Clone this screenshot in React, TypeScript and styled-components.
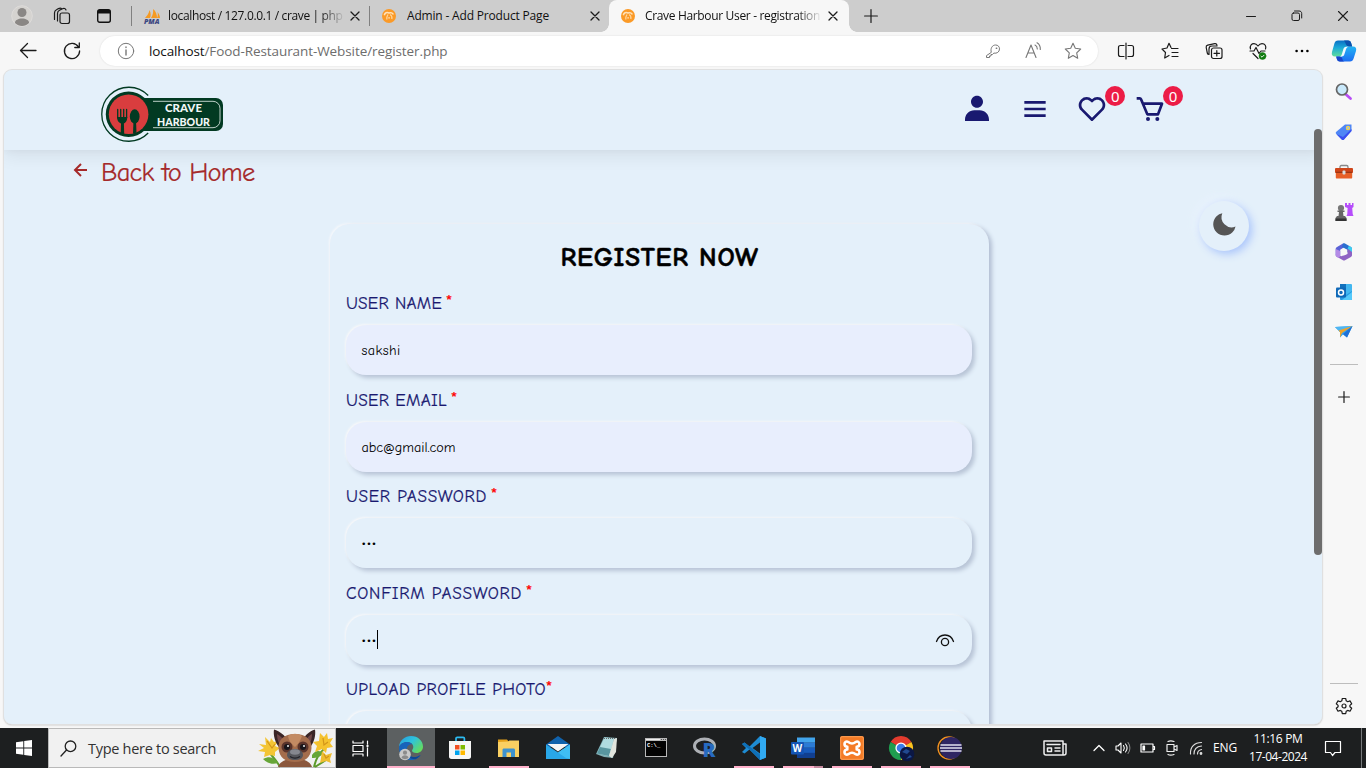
import React, { useLayoutEffect, useRef, useState } from 'react';
import styled, { createGlobalStyle, css } from 'styled-components';
import { BiSolidUser, BiMenu, BiHeart, BiCart, BiLeftArrowAlt, BiSolidMoon } from 'react-icons/bi';

const GlobalStyle = createGlobalStyle`
  * { box-sizing: border-box; }
  body { margin: 0; overflow: hidden; background: #f7f7f7; }
  svg { overflow: visible; flex: none; }
`;

const uiFont = `'Segoe UI', 'Open Sans', 'Noto Sans', sans-serif`;
const pageFont = `'Comic Sans MS', 'Comic Neue', 'Open Sans', sans-serif`;

/* ---------- text set to a fixed measure ---------- */

const Measured = styled.span`
  display: inline-block;
  white-space: pre;
  flex: none;
`;

function FitText({ width, children, className }: { width: number; children: string; className?: string }) {
  const ref = useRef<HTMLSpanElement>(null);
  const [spacing, setSpacing] = useState(0);
  useLayoutEffect(() => {
    if (ref.current) {
      const natural = ref.current.getBoundingClientRect().width;
      setSpacing((width - natural) / children.length);
    }
  }, [width, children]);
  return (
    <Measured ref={ref} className={className} style={{ letterSpacing: `${spacing}px` }}>
      {children}
    </Measured>
  );
}

/* ---------- browser window ---------- */

const Desktop = styled.div`
  width: 1366px;
  height: 768px;
  display: flex;
  flex-direction: column;
  overflow: hidden;
  background: #f7f7f7;
  font-family: ${uiFont};
  color: #111;
`;

const TabStrip = styled.div`
  height: 32px;
  flex: none;
  display: flex;
  align-items: center;
  background: #cdcdcd;
`;

const Slot = styled.div<{ $w: number }>`
  width: ${(p) => p.$w}px;
  height: 100%;
  flex: none;
  display: flex;
  align-items: center;
  justify-content: center;
`;

const Tab = styled.div<{ $w: number; $active?: boolean }>`
  position: relative;
  width: ${(p) => p.$w}px;
  height: 32px;
  flex: none;
  display: flex;
  align-items: center;
  padding-left: 10px;
  ${(p) =>
    p.$active &&
    css`
      background: #f7f7f7;
      border-radius: 8px 8px 0 0;
      &::before,
      &::after {
        content: '';
        position: absolute;
        bottom: 0;
        width: 8px;
        height: 8px;
      }
      &::before {
        left: -8px;
        background: radial-gradient(circle at 0 0, transparent 7.5px, #f7f7f7 8px);
      }
      &::after {
        right: -8px;
        background: radial-gradient(circle at 100% 0, transparent 7.5px, #f7f7f7 8px);
      }
    `}
`;

const TabTitle = styled.div<{ $fade?: boolean; $gap?: number }>`
  width: 176px;
  margin-left: ${(p) => p.$gap ?? 8}px;
  overflow: hidden;
  font-size: 12px;
  line-height: 20px;
  white-space: nowrap;
  ${(p) => p.$fade && css`mask-image: linear-gradient(90deg, #000 152px, transparent 177px);`}
`;

const CloseBox = styled.div`
  width: 24px;
  display: flex;
  justify-content: center;
`;

const Divider = styled.div`
  width: 1px;
  height: 20px;
  background: #808080;
`;

const Spacer = styled.div`
  flex: 1;
`;

const Toolbar = styled.div`
  height: 37px;
  flex: none;
  display: flex;
  align-items: center;
  padding: 0 0 0 6px;
`;

const AddressBar = styled.div`
  width: 998px;
  height: 30px;
  margin-left: 6px;
  flex: none;
  display: flex;
  align-items: center;
  border-radius: 15px;
  background: #fff;
  box-shadow: 0 0 2px rgba(0, 0, 0, 0.12);
  padding: 0 6px 0 6px;
  font-size: 13.5px;
`;

const UrlPath = styled.span`
  color: #6d6d6d;
`;

const Content = styled.div`
  height: 659px;
  flex: none;
  display: flex;
  padding: 1px 0 0 4px;
`;

const Viewport = styled.div`
  position: relative;
  width: 1318px;
  height: 654px;
  flex: none;
  overflow: hidden;
  border-radius: 8px;
  background: #e4f0fa;
  box-shadow: 0 0 0 1px #e0e0e0, 0 1px 2px rgba(0, 0, 0, 0.3);
  font-family: ${pageFont};
`;

const ScrollThumb = styled.div`
  position: absolute;
  right: 0;
  top: 59px;
  width: 8px;
  height: 426px;
  border-radius: 4px;
  background: #6d6d6d;
`;

const SideBar = styled.div`
  width: 44px;
  display: flex;
  flex-direction: column;
  align-items: center;
  padding-top: 2px;
`;

const SideItem = styled.div<{ $h?: number }>`
  height: ${(p) => p.$h ?? 40}px;
  display: flex;
  align-items: center;
`;

const SideRule = styled.div`
  width: 28px;
  height: 1px;
  background: #bdbdbd;
`;

/* ---------- web page ---------- */

const SiteHeader = styled.header`
  height: 80px;
  width: 1318px;
  display: flex;
  align-items: center;
  justify-content: space-between;
  padding: 0 156px 0 96px;
  box-shadow: 0 8px 16px rgba(0, 0, 0, 0.06), 0 2px 6px rgba(0, 0, 0, 0.03);
`;

const Brand = styled.div`
  display: flex;
  margin-top: 8px;
`;

const Nav = styled.nav`
  display: flex;
  gap: 25.6px;
  margin-top: -2px;
  color: #191970;
`;

const NavItem = styled.div`
  position: relative;
  width: 32px;
  height: 32px;
  svg {
    display: block;
    width: 32px;
    height: 32px;
  }
`;

const Count = styled.span`
  position: absolute;
  left: 29px;
  top: -7px;
  width: 20px;
  height: 20px;
  border-radius: 50%;
  background: #ec1c46;
  color: #fff;
  font-family: 'Noto Sans', sans-serif;
  font-size: 15px;
  font-weight: 400;
  line-height: 20px;
  text-align: center;
`;

const BackLink = styled.a`
  display: flex;
  align-items: center;
  height: 40px;
  margin-top: 2px;
  padding-left: 65px;
  color: #a52a2a;
  font-size: 26.5px;
  -webkit-text-stroke: 0.2px currentColor;
  svg {
    width: 24px;
    height: 24px;
    margin: -4px 8px 0 0;
    stroke: none;
  }
`;

const RegisterCard = styled.form`
  width: 659px;
  height: 640px;
  margin: 32px 0 0 326px;
  padding: 17px 16px;
  border-radius: 20px;
  box-shadow: 3px 2px 4px 0 #b3bfd3, -1px -1px 2px 0 #f8f9fb;
`;

const Heading = styled.h1`
  margin: 0 0 14px;
  height: 34px;
  line-height: 34px;
  text-align: center;
  font-size: 27px;
  font-weight: 700;
  color: #000;
  -webkit-text-stroke: 0.5px currentColor;
`;

const Field = styled.div`
  height: 96.5px;
`;

const Label = styled.label`
  display: flex;
  height: 36px;
  line-height: 30px;
  font-size: 17.2px;
  color: #191970;
  -webkit-text-stroke: 0.2px currentColor;
`;

const Star = styled.sup<{ $gap: number }>`
  margin-left: ${(p) => p.$gap}px;
  color: #ff0000;
  font-size: 18px;
  line-height: 26px;
`;

const InputBox = styled.div<{ $filled?: boolean }>`
  height: 50px;
  display: flex;
  align-items: center;
  padding: 1px 17px 0 15.5px;
  width: 626px;
  border-radius: 20px;
  background: ${(p) => (p.$filled ? '#e8eefd' : '#e4f0fa')};
  box-shadow: 3px 3px 4px 0 #b8c4d6, -1px -1px 2px 0 #f8f8f9;
  color: #000;
  font-size: 14.2px;
`;

const Dots = styled.span`
  display: inline-flex;
  margin-top: -2px;
`;

const Caret = styled.span`
  width: 1px;
  height: 19px;
  margin-top: -1px;
  background: #000;
`;

const ThemeToggle = styled.button`
  position: absolute;
  left: 1195px;
  top: 131px;
  width: 50px;
  height: 50px;
  padding: 0 0 3px 0;
  display: flex;
  align-items: center;
  justify-content: center;
  border: 0;
  border-radius: 50%;
  color: #555;
  background: #e4f0fa;
  box-shadow: 3px 3px 9px #a9c4fb, -4px -4px 12px #e9f2fd, 0 0 1px #f3f8ff;
`;

/* ---------- taskbar ---------- */

const TaskBar = styled.div`
  height: 40px;
  flex: none;
  display: flex;
  align-items: center;
  background: #1d1f20;
  color: #fff;
`;

const SearchBox = styled.div`
  width: 288px;
  height: 40px;
  flex: none;
  display: flex;
  align-items: center;
  border: 1px solid #b9b9b9;
  background: #f1f1f1;
  color: #333;
  font-size: 14.5px;
  padding: 0 1px 0 9px;
`;

const Task = styled.div<{ $focus?: boolean; $running?: boolean; $stacked?: boolean }>`
  width: 49px;
  height: 40px;
  flex: none;
  display: flex;
  align-items: center;
  justify-content: center;
  ${(p) =>
    p.$focus &&
    css`
      background:
        linear-gradient(#ffb1cb, #ffb1cb) center bottom / 48px 2px no-repeat,
        linear-gradient(#5c6061, #5c6061) center / 48px 40px no-repeat;
    `}
  ${(p) =>
    p.$running &&
    css`
      background: linear-gradient(#ffb1cb, #ffb1cb) center bottom / 40px 2px no-repeat;
    `}
  ${(p) =>
    p.$stacked &&
    css`
      background: linear-gradient(90deg, #ffb1cb 31px, #c58a9f 31px) center bottom / 40px 2px no-repeat;
    `}
`;

const TrayGroup = styled.div`
  display: flex;
  align-items: center;
  height: 100%;
`;

const Language = styled.div`
  width: 24px;
  font-size: 12px;
  line-height: 18px;
`;

const Clock = styled.div`
  width: 60px;
  margin-left: 11px;
  display: flex;
  flex-direction: column;
  align-items: center;
  font-size: 12px;
  line-height: 18px;
`;

const PeekLine = styled.div`
  width: 1px;
  height: 40px;
  margin: 0 4px 0 10px;
  background: #76797b;
`;

/* ---------- drawings ---------- */

type LineProps = { w?: number; h?: number; color?: string; sw?: number; children: React.ReactNode };

const Line = ({ w = 20, h = 20, color = '#1b1b1b', sw = 1.2, children }: LineProps) => (
  <svg width={w} height={h} viewBox={`0 0 ${w} ${h}`} fill="none" stroke={color} strokeWidth={sw} strokeLinecap="round" strokeLinejoin="round">
    {children}
  </svg>
);

const Art = ({ w = 24, h = 24, children }: { w?: number; h?: number; children: React.ReactNode }) => (
  <svg width={w} height={h} viewBox={`0 0 ${w} ${h}`}>{children}</svg>
);

const CloseIcon = () => (
  <Line w={10} h={10} sw={1.3}><path d="M1 1l8 8M9 1l-8 8" /></Line>
);

const XamppFavicon = () => (
  <Art w={14} h={14}>
    <circle cx="7" cy="7" r="7" fill="#fb9a27" />
    <path d="M2.300 6.200c.6-2.400 2.600-3.300 4.700-2.200 1.700-.9 3.700 0 4.300 1.600" stroke="#ffe2ba" strokeWidth="1.500" fill="none" />
    <path d="M6 5.500c-1 1.500-1.400 3-1.200 5M8.200 5.500c1.500 1 2 2.500 1.600 4.500" stroke="#ffd49a" strokeWidth="1.300" fill="none" />
    <path d="M6.300 8.800h1.600" stroke="#ffe2ba" strokeWidth="1.200" />
  </Art>
);

const Logo = () => (
  <svg width="124" height="57" viewBox="0 0 124 57">
    <path d="M48.200 9.500a27 27 0 1 0 0 37.500" fill="none" stroke="#023a22" strokeWidth="1.300" />
    <rect x="38" y="12" width="85" height="33" rx="7" fill="#023a22" />
    <circle cx="28.600" cy="28.200" r="24" fill="#e4f0fa" />
    <circle cx="28.600" cy="28.200" r="22.800" fill="#023a22" />
    <rect x="42" y="12" width="12" height="33" fill="#023a22" />
    <circle cx="28.600" cy="28.200" r="19.800" fill="#d93d3e" />
    <path d="M53 15.300h60a7 7 0 0 1 7 7v12.400a7 7 0 0 1-7 7H53" fill="none" stroke="#eef5f3" strokeWidth="0.800" />
    <path d="M17.700 23.500v8M20.700 23.500v8M23.700 23.500v8M26.600 23.500v8" stroke="#023a22" strokeWidth="1.300" strokeLinecap="round" />
    <path d="M17 31c0 4.500 2.800 6 4 6.400L20.700 48h3.500l-.3-10.600c1.600-.4 3.400-2.400 3.400-6.400z" fill="#023a22" />
    <ellipse cx="34.700" cy="30.500" rx="4.900" ry="7.200" fill="#023a22" />
    <path d="M33.400 37h2.700l.4 9.500-3.500 1.200z" fill="#023a22" />
    <g fill="#f2f7f7" fontFamily="Lato, 'Open Sans', sans-serif" fontWeight="900" fontSize="11.500">
      <text x="65" y="25.800" textLength="37" lengthAdjust="spacingAndGlyphs">CRAVE</text>
      <text x="57" y="40" textLength="53" lengthAdjust="spacingAndGlyphs">HARBOUR</text>
    </g>
  </svg>
);

const Copilot = () => (
  <svg width="26" height="26" viewBox="0 0 26 26">
    <defs>
      <linearGradient id="copA" x1="0" y1="0" x2="0" y2="1">
        <stop offset="0" stopColor="#0a6fc4" /><stop offset=".45" stopColor="#1ba9d8" /><stop offset="1" stopColor="#5fdd9c" />
      </linearGradient>
      <linearGradient id="copB" x1="0" y1="0" x2="0" y2="1">
        <stop offset="0" stopColor="#22b4f4" /><stop offset="1" stopColor="#1c6df2" />
      </linearGradient>
    </defs>
    <path d="M7 2.500h10c2 0 2.800 1 3.300 3l.9 3h-3.700c-2 0-2.600.7-3.200 2.600l-1.600 5c-.7 1.800-1.400 2.400-3.300 2.400H4c-2.600 0-3.800-1.800-3-4.600l2.400-8.300c.6-2 1.600-3.100 3.600-3.100z" fill="url(#copA)" />
    <path d="M19 23.500H9c-2 0-2.800-1-3.300-3l-.5-2h4c2 0 2.800-.6 3.400-2.500l1.600-5c.6-1.900 1.300-2.500 3.200-2.500H22c2.600 0 3.800 1.600 3 4.400l-2.400 7.600c-.6 2-1.600 3-3.600 3z" fill="url(#copB)" />
    <path d="M13 2.500h4c2 0 2.800 1 3.300 3l.9 3h-3.700C15 8.500 14.500 4 13 2.500z" fill="#0b52ae" />
    <path d="M5.200 18.500h4c1.500 0 2 1.500 2.400 3 .3 1.200.9 2 2 2H9c-2 0-2.800-1-3.300-3z" fill="#1745c9" />
    <path d="M15 8.700h3c-1.800.3-2.400 1-3 2.600l-1.600 4.900c-.5 1.500-1.200 2.200-2.900 2.300H8.500c1.500-.4 2-1.300 2.400-2.600l1.500-4.800c.4-1.300 1.200-2.200 2.600-2.400z" fill="#eef9ff" />
  </svg>
);

const SideSearch = () => (
  <Art w={18} h={18}>
    <path d="M11 11.500l4.500 4" stroke="#b84df5" strokeWidth="2.800" strokeLinecap="round" />
    <circle cx="7" cy="6.500" r="5.500" fill="#c9e9fb" stroke="#666" strokeWidth="1.700" />
  </Art>
);
const SideTag = () => (
  <Art w={18} h={18}>
    <path d="M10 1.500h6.500V8L9 16.500c-.8.800-1.500.800-2.300 0L1.300 11c-.7-.8-.7-1.600 0-2.300z" fill="#4f86f5" />
    <path d="M1.300 11l5.400 5.500c.8.800 1.500.800 2.300 0L16.500 8V6L8 14z" fill="#3a4ff0" />
    <circle cx="13" cy="5" r="1.600" fill="#8fc0ff" stroke="#f5d34b" strokeWidth="1.200" />
  </Art>
);
const SideToolbox = () => (
  <Art w={18} h={18}>
    <path d="M5 6V4c0-1 .6-1.500 1.300-1.500h5.400c.8 0 1.300.5 1.300 1.500v2" fill="none" stroke="#888" strokeWidth="1.300" />
    <rect x="0" y="5" width="18" height="5" rx="1" fill="#cf4519" />
    <path d="M.8 9h16.400v5.500c0 .8-.4 1-1 1H1.800c-.6 0-1-.4-1-1z" fill="#e75f27" />
    <path d="M.8 9.300h16.400" stroke="#8a2c0f" strokeWidth="1" />
    <rect x="7.500" y="7.500" width="3" height="4" rx="1" fill="#d8dcdd" />
  </Art>
);
const SideChess = () => (
  <Art w={20} h={18}>
    <path d="M11 0h2v2h1.500V0h2v2H18V0h1.500v4l-1.300 1 .5 6 .8 2h-7l.8-2 .3-6L11 4z" fill="#b64dfb" />
    <circle cx="7" cy="5" r="3.100" fill="#777" />
    <path d="M3.500 7.500h7v1.600H9l.5 3.900H11l1.500 2v3h-11v-3L3 13h1.500L5 9.100H3.500z" fill="#666" />
    <path d="M1.500 15.500h11V18h-11z" fill="#333" />
  </Art>
);
const Side365 = () => (
  <Art w={18} h={18}>
    <path d="M8 .5l-6 3.400C1 4.500.7 5 .7 6v6l4.500 2V6.800L11 3z" fill="#5a62d6" />
    <path d="M8 .5c.8-.4 1.400-.3 2 0l6 3.500c.8.500 1 1 1 2v5.500L12.500 9V6.800L7 4z" fill="#2a6fcf" />
    <path d="M17 7v5c0 1-.4 1.500-1.100 2L10 17.300c-.8.400-1.400.4-2 0l-6.200-3.500c-.8-.5-1.100-1-1.100-2l5.500 1.500L12.500 11V6z" fill="#8f62c4" />
    <path d="M.7 6v6c0 1 .3 1.500 1.100 2l2 1L5.200 13V8z" fill="#b48be6" />
    <path d="M12.500 5.500L17 9V6c0-1-.3-1.500-1-2l-2-1.200z" fill="#3ccdf0" />
    <path d="M9 5.500l3 1.700v3.500L9 12.500l-3-1.800V7.200z" fill="#f7f7f7" />
  </Art>
);
const SideOutlook = () => (
  <Art w={18} h={18}>
    <rect x="5" y="1" width="12" height="11" rx="1" fill="#42b7f0" />
    <path d="M5 1h6v6H5z" fill="#1272bd" />
    <path d="M5 9l6 3 6-4v8c0 .6-.4 1-1 1H6c-.6 0-1-.4-1-1z" fill="#279be2" />
    <path d="M17 9v7c0 .6-.4 1-1 1H7z" fill="#54c9fa" />
    <rect x="1" y="4.500" width="10" height="10" rx="1" fill="#0f69b8" />
    <circle cx="6" cy="9.500" r="2.500" fill="none" stroke="#fff" strokeWidth="1.500" />
  </Art>
);
const SideDrop = () => (
  <Art w={18} h={18}>
    <path d="M0 4l17.500-1L12 14.500 8 11.500l-3 3V9z" fill="#31a1ea" />
    <path d="M0 4l17.500-1L5 9z" fill="#4fb6f2" />
    <path d="M3.500 7.500L17.500 3 7 10l-2 4.500V9z" fill="#f0a42a" />
    <path d="M8 11l9.500-8L12 14.500z" fill="#1f71d8" />
  </Art>
);

const Mascot = () => (
  <svg width="76" height="38" viewBox="0 0 76 38">
    <path d="M8 18c4 8 10 12 14 20M66 20c-6 6-8 10-10 18M68 31l-11 7" stroke="#5d9b2c" strokeWidth="2" fill="none" />
    <path d="M5 30c7-4 12-1 15 4-6 2-11 0-15-4zM54 26c3-5 8-5 11-2-2 4-6 5-11 5z" fill="#67a638" />
    <path d="M7 8l5 5 1-4 3 4 4-1-3 5 5 2-5 4v4l-5-1-6 2 1-5-7-1 6-3-5-4 7 1z" fill="#f3c535" />
    <path d="M62 4l4 4 3-4 1 6 5-1-3 5 3 4-6 1-1 5-4-4-7 3 2-6-4-4 6-1z" fill="#f5c22e" />
    <path d="M64 22l4 4 6-2-2 6 1 4-5-2-6 2 1-5z" fill="#efbd30" />
    <path d="M9 12l5 7 3-4M65 9l1 7 4-3M66 25l2 4 3-2" stroke="#d39519" strokeWidth="1.200" fill="none" />
    <path d="M16 .5c6 2 11 6 13 10l-7 9C17 14 15 6 16 .500zM57 .5c-6 2-10 6-12 10l7 8c4-5 6-12 5-18z" fill="#3a2526" />
    <path d="M19 5c4 2 6 5 7 7l-4 4c-2-3-3-7-3-11zM54 5c-4 2-5 5-6 7l3 4c2-3 3-7 3-11z" fill="#714748" />
    <path d="M20 38c2-6 8-8 17-8s15 2 17 8z" fill="#8b573c" />
    <path d="M37 5c11 0 17 6 16.500 14C53 28 47 33 37 33s-16-5-16.500-14C20 11 26 5 37 5z" fill="#a46d4c" />
    <path d="M30 7c4-3 10-3 14 0-2 6-4 8-7 11-3-3-6-5-7-11z" fill="#c38b63" />
    <circle cx="29" cy="18" r="5.500" fill="#5a342b" /><circle cx="45" cy="18" r="5.500" fill="#5a342b" />
    <circle cx="29" cy="18" r="3" fill="#18151a" /><circle cx="45" cy="18" r="3" fill="#18151a" />
    <circle cx="30" cy="17" r="1" fill="#eee" /><circle cx="46" cy="17" r="1" fill="#eee" />
    <path d="M29 26c0-4 4-6 8-6s8 2 8 6c0 3-3 5-8 5s-8-2-8-5z" fill="#55565c" />
    <ellipse cx="37" cy="23" rx="5" ry="2.800" fill="#85878f" />
    <path d="M32 27.500c3 2 7 2 10 0" stroke="#222229" strokeWidth="1.300" fill="none" />
  </svg>
);

const EdgeIcon = () => (
  <svg width="26" height="26" viewBox="0 0 26 26">
    <defs>
      <linearGradient id="edgeTop" x1="0" y1="0" x2="1" y2=".7">
        <stop offset="0" stopColor="#269cdf" /><stop offset=".5" stopColor="#2ec2dd" /><stop offset="1" stopColor="#65dc5c" />
      </linearGradient>
    </defs>
    <path d="M1 12C1.500 5 7 1 13 1c7 0 12 5 12 10.500 0 4-3 6.500-6.500 6.500-3 0-4.500-1.200-4.500-2.400 0-1 1.300-1.600 1.300-3.600C15.300 8.500 12 7 9 7c-4 0-7 2.500-8 5z" fill="url(#edgeTop)" />
    <path d="M1 12c1-2.500 4-5 8-5 2.500 0 4.500.9 5.600 2.500-3-1-6 1.500-6 5.500 0 5.500 5.500 8.500 11 6.500l3-1.500c-2 3.200-5.600 5-9.600 5C6 25 .6 19 1 12z" fill="#1764bb" />
    <path d="M8.600 15c0 5.500 5.500 8.500 11 6.500l3-1.500c-1 1.600-3 3.300-5.200 4.200C11 24 7 20 8.600 15z" fill="#0f4694" />
    <circle cx="7" cy="19.500" r="5.800" fill="#c9c9c9" />
    <circle cx="7" cy="17.700" r="2.100" fill="#8b8b8b" /><path d="M3.500 23c.3-3.600 6.700-3.600 7 0-2 1.500-5 1.500-7 0z" fill="#8b8b8b" />
  </svg>
);
const StoreIcon = () => (
  <Art>
    <path d="M8 5V2.500c0-.8.500-1.200 1.200-1.200h6c.8 0 1.200.4 1.200 1.200V5" stroke="#2cbcf2" strokeWidth="1.700" fill="none" />
    <path d="M1 5h22v15.500c0 1.600-.8 2.500-2.500 2.500h-17C1.800 23 1 22 1 20.500z" fill="#f6f6f6" />
    <path d="M7 9h4.500v4.500H7z" fill="#f25022" /><path d="M12.500 9H17v4.500h-4.500z" fill="#7fba00" />
    <path d="M7 14.500h4.500V19H7z" fill="#00a4ef" /><path d="M12.500 14.500H17V19h-4.500z" fill="#ffb900" />
  </Art>
);
const FolderIcon = () => (
  <Art>
    <path d="M1 3.500h9l2 2.500H1z" fill="#e6a21a" /><path d="M1 6l10-.500 1.500-1H22v16.500H1z" fill="#fad062" />
    <path d="M5.500 21v-7c0-1 .6-1.500 1.500-1.500h9.500c1 0 1.500.6 1.500 1.500v7h-4v-4.500H9.500V21z" fill="#3e92ce" />
  </Art>
);
const MailIcon = () => (
  <Art>
    <path d="M0 8.500L12 0l12 8.500V11H0z" fill="#1062ac" />
    <path d="M0 8.500l12 8 12-8V23H0z" fill="#29a7e8" /><path d="M0 8.500L20 22l4 1V8.500l-12 8z" fill="#3fbef3" />
    <path d="M1.500 8h21L12 15.500z" fill="#f5f5f5" />
  </Art>
);
const NotepadIcon = () => (
  <Art>
    <path d="M9 1l13 1-4 20-9-1-8-3z" fill="#7faeb4" /><path d="M9.500 1.500l9.500.7-4.500 18L2 17.500z" fill="#b0dbe0" />
    <path d="M5 11l11 2-2 7-12-2.500z" fill="#5996a0" /><path d="M22 2l-1 14-4 6-3-2L19 3z" fill="#e1e4dd" />
    <path d="M9 2.500h12" stroke="#666" strokeDasharray="1 1" />
  </Art>
);
const TerminalIcon = () => (
  <Art>
    <path d="M1 2h22v19H1z" fill="#b9b9b9" /><path d="M2 5h20v15H2z" fill="#030303" />
    <path d="M2 3.500h14" stroke="#eee" /><path d="M17 3.500h5" stroke="#555" strokeDasharray="1 1" />
    <text x="3" y="11" fill="#fff" fontSize="5.500" fontFamily="'Liberation Mono', monospace" fontWeight="700">C:\_</text>
  </Art>
);
const RIcon = () => (
  <Art>
    <ellipse cx="11.500" cy="10" rx="10" ry="7" fill="none" stroke="#adb0b5" strokeWidth="3" />
    <text x="9.500" y="21" fill="#276ac0" fontSize="19" fontWeight="800" fontFamily="'Open Sans', sans-serif">R</text>
  </Art>
);
const CodeIcon = () => (
  <Art>
    <path d="M18 0l6 2.500v19L18 24 7.500 13.500 2.500 17.500 0 16l4-4-4-4 2.500-1.500 5 4z" fill="#1e8cd3" />
    <path d="M18 6.500v11L10.500 12z" fill="#1d1f20" /><path d="M18 0l6 2.500v19L18 24z" fill="#31aaf2" />
    <path d="M0 8l2.500-1.500L18 18.500V24L7.500 13.500z" fill="#0f6fb7" />
  </Art>
);
const WordIcon = () => (
  <Art>
    <path d="M6 1.500h18v5.200H6z" fill="#42a5ec" /><path d="M6 6.500h18v5.300H6z" fill="#2b7bd5" />
    <path d="M6 11.700h18V17H6z" fill="#185cbd" /><path d="M6 16.800h18V22H6z" fill="#113f90" />
    <rect y="6" width="13" height="12.500" rx="1" fill="#1455b5" />
    <text x="1.600" y="15.700" fill="#fff" fontSize="10" fontWeight="700" fontFamily="'Open Sans', sans-serif">W</text>
  </Art>
);
const XamppIcon = () => (
  <Art>
    <rect width="24" height="24" rx="2" fill="#f47b26" />
    <rect x=".7" y=".7" width="22.600" height="22.600" rx="1.500" fill="none" stroke="#ffa761" strokeWidth=".8" />
    <path
      d="M8.300 6c-2-1.300-3.800 0-3.800 2 0 1.600 1 2.700 2.800 2.700v2.800c-1.800 0-2.800 1-2.800 2.700 0 2 2 3.200 3.800 2 1.300-1 2-1.500 3.700-1.500s2.400.5 3.700 1.500c1.800 1.200 3.800 0 3.800-2 0-1.600-1-2.700-2.800-2.700v-2.800c1.800 0 2.800-1 2.800-2.700 0-2-2-3.300-3.800-2C14.400 7 13.700 7.500 12 7.500S9.600 7 8.300 6z"
      fill="none"
      stroke="#fff"
      strokeWidth="2.600"
      strokeLinejoin="round"
    />
  </Art>
);
const ChromeIcon = () => (
  <svg width="24" height="24" viewBox="0 0 24 24">
    <path d="M12 12L1.600 6A12 12 0 0 1 22.400 6z" fill="#e33b2e" /><path d="M12 12L22.400 6A12 12 0 0 1 12 24z" fill="#fcc31e" />
    <path d="M12 12V24A12 12 0 0 1 1.600 6z" fill="#1f9d4f" /><circle cx="12" cy="12" r="5.600" fill="#fff" /><circle cx="12" cy="12" r="4.300" fill="#3b7be8" />
    <circle cx="18" cy="18" r="7.300" fill="#0b1744" /><path d="M13 16l4-3 4 2-3 3zM17 23l4-4 2 2" fill="#214a91" />
  </svg>
);
const EclipseIcon = () => (
  <Art>
    <circle cx="11" cy="12" r="11" fill="none" stroke="#f5921f" strokeWidth="1.300" />
    <circle cx="13" cy="12" r="11" fill="#2f2663" />
    <path d="M2.500 9h21M2 12h22M2.500 15h21" stroke="#e1dfee" strokeWidth="1.300" />
  </Art>
);

const tasks: { icon: React.ReactNode; focus?: boolean; running?: boolean; stacked?: boolean }[] = [
  { icon: <EdgeIcon />, focus: true },
  { icon: <StoreIcon /> },
  { icon: <FolderIcon />, running: true },
  { icon: <MailIcon /> },
  { icon: <NotepadIcon /> },
  { icon: <TerminalIcon /> },
  { icon: <RIcon /> },
  { icon: <CodeIcon />, running: true },
  { icon: <WordIcon />, running: true, stacked: true },
  { icon: <XamppIcon />, running: true },
  { icon: <ChromeIcon />, running: true },
  { icon: <EclipseIcon />, running: true },
];

const sideIcons = [SideSearch, SideTag, SideToolbox, SideChess, Side365, SideOutlook, SideDrop];

const fields = [
  { label: 'USER NAME', width: 96, gap: 3.5, value: 'sakshi', valueWidth: 39, filled: true },
  { label: 'USER EMAIL', width: 101, gap: 3.5, value: 'abc@gmail.com', valueWidth: 94, filled: true },
  { label: 'USER PASSWORD', width: 141, gap: 3.5, value: '•••', valueWidth: 15.5, masked: true },
  { label: 'CONFIRM PASSWORD', width: 176, gap: 3.5, value: '•••', valueWidth: 15.5, masked: true, editing: true },
  { label: 'UPLOAD PROFILE PHOTO', width: 200, gap: -0.5, value: '', valueWidth: 0 },
];

function Tabs() {
  return (
    <TabStrip>
      <Slot $w={44}>
        <Art w={22} h={22}>
          <circle cx="11" cy="11" r="10.300" fill="#d5d3d0" stroke="#dedcda" />
          <circle cx="11" cy="7.500" r="4.500" fill="#8a8785" />
          <path d="M4 18c-.5-6 14.500-6 14 0-4 4-10 4-14 0z" fill="#8a8785" />
        </Art>
      </Slot>
      <Slot $w={36}>
        <Line w={18} h={18} sw={1.2}>
          <rect x="7" y="6" width="9.500" height="10.500" rx="2" />
          <path d="M4.500 14V6.500c0-1.500.7-2.500 2-3.200L9.500 1.700c1.700-.8 3 0 3.500 1.300M1.500 12.500V6c0-1.500.7-2.500 2-3.200l2-1.200C7 .8 8 1 8.800 1.800" />
        </Line>
      </Slot>
      <Slot $w={48}>
        <Art w={14} h={14}>
          <rect x=".7" y=".7" width="12.600" height="12.600" rx="2" fill="none" stroke="#111" strokeWidth="1.400" />
          <path d="M1 1h12v3.500H1z" fill="#111" />
        </Art>
      </Slot>
      <Slot $w={6}><Divider /></Slot>
      <Tab $w={233}>
        <Art w={16} h={16}>
          <path d="M1 10c2-2 4-5 4.500-8C7 5 7 8 6 10zM7 10c2-3 2.500-6 2-9 3 2 4 6 4 9zM13 10c1-2 1-4 .5-6C15 6 16 8 16 10z" fill="#f59a23" />
          <text x="0" y="15.500" textLength="15.500" lengthAdjust="spacingAndGlyphs" fontSize="6" fontStyle="italic" fontWeight="800" fill="#3d4882" fontFamily="'Open Sans', sans-serif">PMA</text>
        </Art>
        <TabTitle $fade><FitText width={174.5}>localhost / 127.0.0.1 / crave | php</FitText></TabTitle>
        <CloseBox><CloseIcon /></CloseBox>
      </Tab>
      <Slot $w={5}><Divider /></Slot>
      <Tab $w={237}>
        <XamppFavicon />
        <TabTitle $gap={11}><FitText width={142}>Admin - Add Product Page</FitText></TabTitle>
        <CloseBox><CloseIcon /></CloseBox>
      </Tab>
      <Tab $w={240} $active>
        <Slot $w={18}><XamppFavicon /></Slot>
        <TabTitle $fade $gap={8}><FitText width={175}>Crave Harbour User - registration</FitText></TabTitle>
        <CloseBox><CloseIcon /></CloseBox>
      </Tab>
      <Slot $w={43}><Line w={14} h={14}><path d="M7 .6v12.800M.6 7h12.800" /></Line></Slot>
      <Spacer />
      <Slot $w={46}><Line w={10} h={10} sw={1}><path d="M.5 5.500h9" /></Line></Slot>
      <Slot $w={46}><Line w={12} h={12} sw={1}><rect x="1" y="3" width="7.500" height="7.500" rx="1.500" /><path d="M3.500 1h4.500c1.700 0 2.700.9 2.700 2.500V8" /></Line></Slot>
      <Slot $w={46}><Line w={10} h={10} sw={1.100}><path d="M.5.5l9 9M9.500.5l-9 9" /></Line></Slot>
    </TabStrip>
  );
}

function ToolbarRow() {
  const grey = '#777';
  return (
    <Toolbar>
      <Slot $w={44}><Line w={18} h={18} sw={1.300}><path d="M1.500 8.500H17M8.500 1.500l-7 7 7 7" /></Line></Slot>
      <Slot $w={44}><Line w={18} h={18} sw={1.300}><path d="M15.500 5A7.600 7.600 0 1 0 16.600 9M16.300 1v4.500h-4.500" /></Line></Slot>
      <AddressBar>
        <Slot $w={40}><Line w={18} h={18} color={grey} sw={1}><circle cx="9" cy="9" r="7.700" /><path d="M9 8v5M9 5v.5" strokeWidth="1.400" /></Line></Slot>
        <Slot $w={3} />
        <FitText width={55.5}>localhost</FitText>
        <UrlPath><FitText width={243}>/Food-Restaurant-Website/register.php</FitText></UrlPath>
        <Spacer />
        <Slot $w={40}><Line w={16} h={16} color={grey} sw={1}><path d="M6.200 9c-1-3.500 1-7 4.400-7 2.400 0 3.900 1.700 3.900 3.900 0 3.200-2.800 4.800-5.700 4.200L7.500 11.500H6V13H4.500v1.500h-3V13z" /><path d="M11.300 5.200h.4" strokeWidth="1.500" /></Line></Slot>
        <Slot $w={40}><Line w={18} h={18} color={grey} sw={1.100}><path d="M2 15.500L7 3l5 12.500M3.800 11h6.500M11 3c1.500.7 2.300 2 2.300 4M13 .8c2.300 1.300 3.500 3.500 3.300 6.700" /></Line></Slot>
        <Slot $w={39}><Line w={18} h={18} color={grey} sw={1.100}><path d="M9 1.300l2.300 5 5.400.7-4 3.800 1 5.500L9 13.600l-4.700 2.700 1-5.500-4-3.800 5.400-.700z" /></Line></Slot>
      </AddressBar>
      <Slot $w={6} />
      <Slot $w={44}><Line w={18} h={18} sw={1.200}><path d="M9 1v16M7 3.500H3.500c-1 0-2 .7-2 2v7c0 1.300 1 2 2 2H7M11 3.500h3.500c1 0 2 .7 2 2v7c0 1.300-1 2-2 2H11" /></Line></Slot>
      <Slot $w={44}><Line w={18} h={18} sw={1.200}><path d="M10 5.500L8 1.300 6 6 1 7l3.500 3.500-.8 5.500L8 13.500M10.500 6.500H17M11 10.500h6M11 14.500h6" /></Line></Slot>
      <Slot $w={44}><Line w={18} h={18} sw={1.200}><rect x="6.500" y="6" width="10.500" height="10.500" rx="2" /><path d="M11.800 8.500v5.500M9 11.300h5.500M4 12.500c-1 0-1.500-.6-1.700-1.500L1.200 5.500c-.2-1.200.3-2 1.500-2.300l7-1.500c1.200-.2 2 .2 2.300 1.500M4 12.500V7c0-2 1-3 3-3h5" /></Line></Slot>
      <Slot $w={44}>
        <Line w={18} h={18} sw={1.200}><path d="M1.500 7C.5 3 3 1.700 5 1.700c2 0 3 1 4 2.300 1-1.300 2-2.300 4-2.300 3 0 4.500 2.500 3.500 5.300M1 9h4l2-3.500 3 6L12 9h4M4 11.500l5 5" /><circle cx="13.500" cy="14" r="3.500" fill="#107c10" stroke="#107c10" strokeWidth=".5" /><path d="M12 14.200l1 1 2-2" stroke="#fff" strokeWidth=".9" /></Line>
      </Slot>
      <Slot $w={44}><Art w={14} h={4}><circle cx="1.600" cy="2" r="1.300" /><circle cx="7" cy="2" r="1.300" /><circle cx="12.400" cy="2" r="1.300" /></Art></Slot>
      <Slot $w={40}><Copilot /></Slot>
    </Toolbar>
  );
}

function RegisterPage() {
  return (
    <Viewport>
      <SiteHeader>
        <Brand><Logo /></Brand>
        <Nav>
          <NavItem><BiSolidUser /></NavItem>
          <NavItem><BiMenu /></NavItem>
          <NavItem><BiHeart /><Count>0</Count></NavItem>
          <NavItem><BiCart /><Count>0</Count></NavItem>
        </Nav>
      </SiteHeader>
      <BackLink><BiLeftArrowAlt /><FitText width={153.5}>Back to Home</FitText></BackLink>
      <RegisterCard>
        <Heading><FitText width={198}>REGISTER NOW</FitText></Heading>
        {fields.map((f) => (
          <Field key={f.label}>
            <Label>
              <FitText width={f.width}>{f.label}</FitText>
              <Star $gap={f.gap}>*</Star>
            </Label>
            <InputBox $filled={f.filled}>
              {f.value && !f.masked && <FitText width={f.valueWidth}>{f.value}</FitText>}
              {f.masked && <Dots><FitText width={f.valueWidth}>{f.value}</FitText></Dots>}
              {f.editing && (
                <>
                  <Caret />
                  <Spacer />
                  <Line w={20} h={14} sw={1.300} color="#111"><path d="M1.500 8.500C3 4 6 2 10 2s7 2 8.500 6.500" /><circle cx="10" cy="9" r="3.600" /></Line>
                </>
              )}
            </InputBox>
          </Field>
        ))}
      </RegisterCard>
      <ThemeToggle><BiSolidMoon size={27} /></ThemeToggle>
      <ScrollThumb />
    </Viewport>
  );
}

function Taskbar() {
  return (
    <TaskBar>
      <Slot $w={48}><Art w={16} h={16}><path d="M0 2.300L7.300 1.200v6.300H0zM8.200 1.100L16 0v7.500H8.200zM0 8.400h7.300v6.400L0 13.700zM8.200 8.400H16V16l-7.800-1.100z" fill="#fff" /></Art></Slot>
      <SearchBox>
        <Slot $w={20}><Line w={17} h={17} sw={1.300} color="#222"><circle cx="10.500" cy="6.300" r="5.300" /><path d="M6.500 10L1 16" /></Line></Slot>
        <Slot $w={10} />
        <FitText width={128}>Type here to search</FitText>
        <Spacer />
        <Mascot />
      </SearchBox>
      <Slot $w={50.5}>
        <Line w={19} h={17} color="#fff" sw={1.200}><path d="M1 1v2h10V1M1 16v-2h10v2M1 5.500h10v6H1zM15.500 1v3M15.500 8v8" /><path d="M15.500 5.500v1" strokeWidth="2" /></Line>
      </Slot>
      {tasks.map((t, i) => <Task key={i} $focus={t.focus} $running={t.running} $stacked={t.stacked}>{t.icon}</Task>)}
      <Spacer />
      <TrayGroup>
        <Slot $w={56}>
          <Line w={24} h={16} color="#eee" sw={1.500}><path d="M1 1h19v14H3c-1.300 0-2-.7-2-2zM20 4h3v9c0 1.300-.7 2-2 2h-2M4 4.500h13M12 8h5M12 11h5" /><path d="M4.500 8h4v3.500h-4z" /></Line>
        </Slot>
        <Slot $w={32}><Line w={12} h={8} color="#fff" sw={1.300}><path d="M1 6.500l5-5 5 5" /></Line></Slot>
        <Slot $w={15}><Line w={16} h={14} color="#fff" sw={1.100}><path d="M1 5v4h2l3 3V2L3 5zM8.500 4.500c1 1.500 1 3.500 0 5M10.500 3c2 2.500 2 5.500 0 8" /><path d="M13 1.500c2.500 3 2.500 8 0 11" stroke="#888" /></Line></Slot>
        <Slot $w={35}><Line w={16} h={10} color="#fff" sw={1.200}><path d="M1 1h12v8H1zM13.500 3.500h1v3h-1" /><path d="M3 3h1.500v4H3z" fill="#fff" /></Line></Slot>
        <Slot $w={15}><Line w={14} h={16} color="#eee" sw={1.200}><path d="M1 4.500h7v7H1zM8 7l3-1.500v5L8 9M2 1.500c1.500-.8 4-.8 6 0M2 14.500c1.500.8 4 .8 6 0" /></Line></Slot>
        <Slot $w={33}><Line w={14} h={14} color="#ddd" sw={1.200}><path d="M.5 13C0 6 4.500 1.500 11.500 1.500M4 13c0-4.500 3-7.500 7.500-8M7.500 13c0-2.300 1.500-4 4-4.500" /><circle cx="11" cy="12.500" r=".8" fill="#fff" /></Line></Slot>
        <Language><FitText width={24}>ENG</FitText></Language>
        <Clock>
          <FitText width={49}>11:16 PM</FitText>
          <FitText width={58}>17-04-2024</FitText>
        </Clock>
        <Slot $w={7} />
        <Slot $w={36}><Line w={18} h={17} color="#fff" sw={1.200}><path d="M1.500 1.500h15v11H11L8.500 15.500 6.500 12.500h-5z" /></Line></Slot>
        <PeekLine />
      </TrayGroup>
    </TaskBar>
  );
}

export default function App() {
  return (
    <Desktop>
      <GlobalStyle />
      <Tabs />
      <ToolbarRow />
      <Content>
        <RegisterPage />
        <SideBar>
          {sideIcons.map((Icon, i) => <SideItem key={i}><Icon /></SideItem>)}
          <SideItem $h={12} />
          <SideRule />
          <SideItem $h={64}><Line w={12} h={12} sw={1.200}><path d="M6 .6v10.800M.6 6h10.800" /></Line></SideItem>
          <Spacer />
          <SideRule />
          <SideItem $h={44}>
            <Line w={18} h={18} sw={1.200}>
              <path d="M7.300 1.500h3.400l.5 2.300 1.500.9 2.300-.8 1.700 2.900-1.800 1.600v1.300l1.800 1.600-1.700 2.900-2.300-.8-1.500.9-.5 2.300H7.300l-.5-2.300-1.500-.9-2.300.8-1.700-2.900 1.800-1.600V8.400L1.300 6.800 3 3.900l2.300.8 1.500-.900z" />
              <circle cx="9" cy="9" r="2" />
            </Line>
          </SideItem>
        </SideBar>
      </Content>
      <Taskbar />
    </Desktop>
  );
}
